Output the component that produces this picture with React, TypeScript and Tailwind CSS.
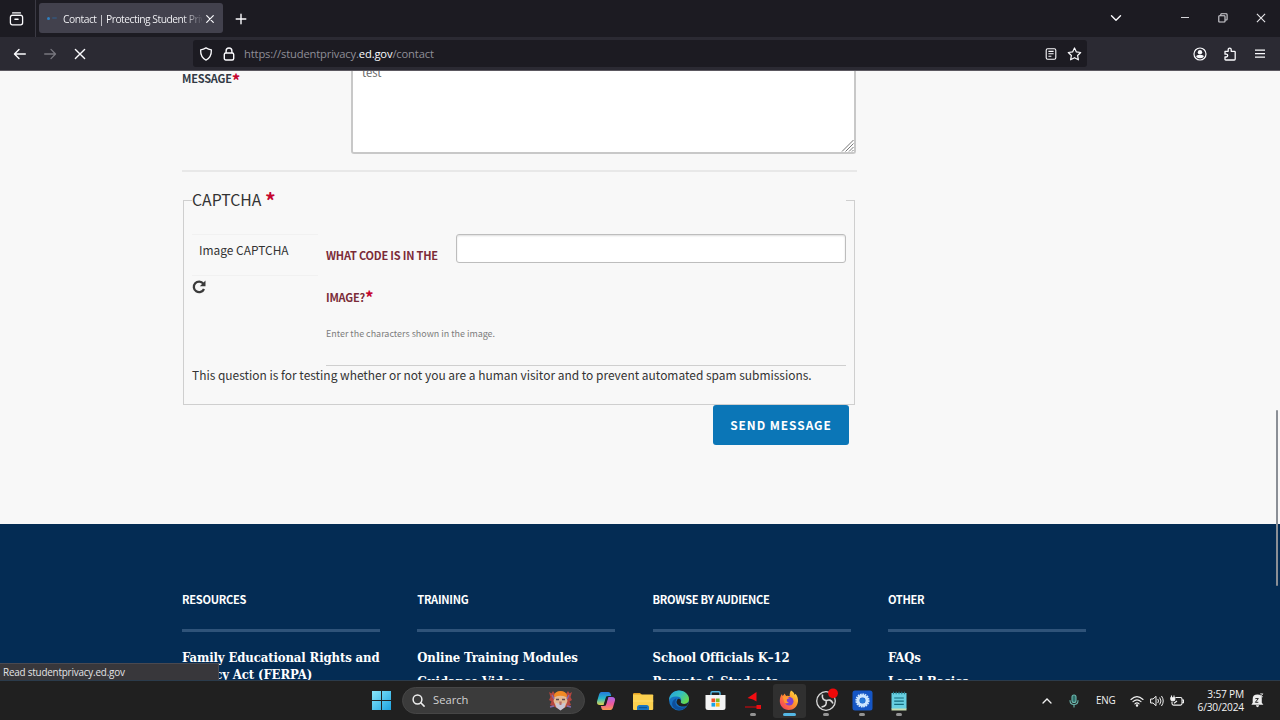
import React from "react";

const footerColumns = [
  {
    title: "Resources",
    links: ["Family Educational Rights and Privacy Act (FERPA)"],
  },
  {
    title: "Training",
    links: ["Online Training Modules", "Guidance Videos"],
  },
  {
    title: "Browse by Audience",
    links: ["School Officials K–12", "Parents & Students"],
  },
  {
    title: "Other",
    links: ["FAQs", "Legal Basics"],
  },
];

const TabStrip = () => {
  return (
    <div className="flex h-[37px] bg-[#1c1b22] text-[#fbfbfe]">
      <div className="flex w-9 items-center border-r border-[#3b3a44] pl-[9px]">
        <svg width="16" height="16" viewBox="0 0 16 16" fill="none" stroke="currentColor" strokeWidth="1.3" strokeLinecap="round">
          <path d="M3.6 1.9h7.8M2.4 4.4h10.2" />
          <rect x="1.4" y="4.4" width="12.2" height="9.4" rx="2" />
          <path d="M6 8.2h3" strokeWidth="1.6" />
        </svg>
      </div>
      <div className="mt-[3px] ml-[3px] flex h-[30px] w-[184px] items-center rounded-[3px] bg-[#42414d]">
        <span className="ml-2 h-[3px] w-[3px] rounded-full bg-[#2f7fc0]" />
        <span className="ml-[2px] h-[2px] w-[5px] rounded-full bg-[#38506f]" />
        <span className="mt-px ml-[6px] w-[139px] overflow-hidden bg-linear-to-r from-[#fbfbfe] from-[86%] to-[#55545f] bg-clip-text text-[10.3px] leading-[18px] tracking-[-0.5px] whitespace-nowrap text-transparent">
          Contact | Protecting Student Privacy
        </span>
        <svg className="mt-px ml-[3px]" width="10" height="10" viewBox="0 0 10 10" stroke="currentColor" strokeWidth="1.2" strokeLinecap="round">
          <path d="M1.7 1.7l6.6 6.6M8.3 1.7L1.7 8.3" />
        </svg>
      </div>
      <svg className="mt-[13px] ml-3" width="12" height="12" viewBox="0 0 12 12" stroke="currentColor" strokeWidth="1.4" strokeLinecap="round">
        <path d="M6 1.2v9.6M1.2 6h9.6" />
      </svg>
      <div className="ml-auto flex h-[36px] items-center">
        <svg width="12" height="12" viewBox="0 0 12 12" fill="none" stroke="currentColor" strokeWidth="1.4" strokeLinecap="round" strokeLinejoin="round">
          <path d="M1.5 3.8L6 8.2l4.5-4.4" />
        </svg>
        <svg className="ml-[58px]" width="10" height="10" viewBox="0 0 10 10" stroke="#d5d5da" strokeWidth="1">
          <path d="M1 4.5h8" />
        </svg>
        <svg className="ml-[28px]" width="10" height="10" viewBox="0 0 10 10" fill="none" stroke="#d5d5da" strokeWidth="1.1">
          <rect x="0.8" y="2.8" width="6.2" height="6.2" rx="0.6" />
          <path d="M2.8 2.6V1.6q0-.8.8-.8h4.6q.9 0 .9.9v4.5q0 .8-.8.8H7.2" />
        </svg>
        <svg className="mr-[14px] ml-[28px]" width="10" height="10" viewBox="0 0 10 10" stroke="#e8e8ec" strokeWidth="1.1">
          <path d="M.9.9l8.2 8.2M9.1.9L.9 9.1" />
        </svg>
      </div>
    </div>
  );
};

const Toolbar = () => {
  return (
    <div className="flex h-[34px] items-center border-b border-[#5b5860] bg-[#2b2a33] text-[#fbfbfe]">
      <svg className="ml-[13px]" width="14" height="12" viewBox="0 0 14 12" fill="none" stroke="currentColor" strokeWidth="1.4" strokeLinecap="round" strokeLinejoin="round">
        <path d="M12.3 6H1.7M6 1.4L1.5 6 6 10.6" />
      </svg>
      <svg className="ml-4" width="14" height="12" viewBox="0 0 14 12" fill="none" stroke="#78777f" strokeWidth="1.3" strokeLinecap="round" strokeLinejoin="round">
        <path d="M1.7 6h10.6M8 1.4L12.5 6 8 10.6" />
      </svg>
      <svg className="ml-[17px]" width="12" height="12" viewBox="0 0 12 12" stroke="currentColor" strokeWidth="1.4" strokeLinecap="round">
        <path d="M1.4 1.4l9.2 9.2M10.6 1.4l-9.2 9.2" />
      </svg>
      <div className="ml-[107px] flex h-[27px] w-[894px] items-center rounded-[3px] bg-[#1c1b22]">
        <svg className="ml-[6px]" width="14" height="14" viewBox="0 0 14 14" fill="none" stroke="currentColor" strokeWidth="1.3" strokeLinejoin="round">
          <path d="M7 .9c1.7 1.1 3.5 1.7 5.4 1.9C12.5 7.5 11.2 11.2 7 13.1 2.8 11.2 1.5 7.5 1.6 2.8 3.5 2.6 5.3 2 7 .9z" />
        </svg>
        <svg className="ml-[10px]" width="12" height="14" viewBox="0 0 12 14" fill="none" stroke="currentColor" strokeWidth="1.4">
          <rect x="1.3" y="6" width="9.4" height="7" rx="1.5" />
          <path d="M3.1 6V3.9a2.9 2.9 0 0 1 5.8 0V6" />
        </svg>
        <span className="mt-px ml-[9px] text-[11.2px] leading-[18px] tracking-[-0.15px] text-[#8f8e97]">
          https://studentprivacy.<span className="text-[#fbfbfe]">ed.gov</span>/contact
        </span>
        <svg className="ml-auto" width="12" height="12" viewBox="0 0 12 12" fill="none" stroke="currentColor" strokeWidth="1.1">
          <rect x="1.2" y=".8" width="9.6" height="10.4" rx="1.5" />
          <path d="M3.4 3.4h5.2M3.4 5.8h5.2M3.4 8.2h3" />
        </svg>
        <svg className="mr-[5px] ml-[10px]" width="15" height="14" viewBox="0 0 15 14" fill="none" stroke="currentColor" strokeWidth="1.2" strokeLinejoin="round">
          <path d="M7.5 1l1.9 3.9 4.3.6-3.1 3 .8 4.3-3.9-2.1-3.9 2.1.8-4.3-3.1-3 4.3-.6z" />
        </svg>
      </div>
      <div className="mr-[14px] ml-auto flex items-center">
        <svg width="14" height="14" viewBox="0 0 14 14">
          <circle cx="7" cy="7" r="6" fill="none" stroke="currentColor" strokeWidth="1.2" />
          <circle cx="7" cy="5.3" r="2.2" fill="currentColor" />
          <path d="M3.2 9.8q0-1.9 1.9-1.9h3.8q1.9 0 1.9 1.9Q9.3 11.3 7 11.3T3.2 9.8z" fill="currentColor" />
        </svg>
        <svg className="ml-[16px]" width="14" height="14" viewBox="0 0 14 14" fill="none" stroke="currentColor" strokeWidth="1.3" strokeLinejoin="round">
          <path d="M2 4.3h3.2V2.6a1.5 1.5 0 0 1 3 0v1.7h3.2q.8 0 .8.8v7q0 .9-.9.9H2.800q-.8 0-.8-.8V10h1.300a1.400 1.400 0 0 0 0-2.800H2z" />
        </svg>
        <svg className="ml-[17px]" width="12" height="12" viewBox="0 0 12 12" stroke="currentColor" strokeWidth="1.2">
          <path d="M1 2.2h10M1 5.7h10M1 9.2h10" />
        </svg>
      </div>
    </div>
  );
};

const ContactForm = () => {
  return (
    <div className="h-[453px] bg-[#f8f8f8] pl-[182px] text-[#333]">
      <div className="w-[675px]">
        <div className="flex h-[83px]">
          <div className="-mt-px flex w-[169px] text-[11px] leading-4 font-bold tracking-[-0.2px] text-[#323a45]">
            MESSAGE<span className="text-[17px] leading-[20px] text-[#c5052f]">*</span>
          </div>
          <div className="relative h-[83px] w-[505px] overflow-hidden rounded-b-[3px] border-2 border-t-0 border-[#c8c8c8] bg-white pl-[9px]">
            <div className="-mt-[7px] text-[11.2px] leading-4 text-[#666]">test</div>
            <svg className="absolute right-0 bottom-0" width="13" height="13" viewBox="0 0 13 13" stroke="#777" strokeWidth="1">
              <path d="M1 12.5L12.5 1M4.5 12.5l8-8M8 12.5L12.5 8M11 12.5l1.5-1.5" />
            </svg>
          </div>
        </div>
        <div className="mt-4 h-[2px] bg-[#e8e8e8]" />
        <fieldset className="mt-[14px] ml-px h-[219px] w-[672px] border border-[#cfcfcf] px-2">
          <legend className="h-[28px] w-full text-[15.8px] leading-[28px]">
            CAPTCHA <span className="relative top-[3px] text-[21px] leading-none font-bold text-[#c5052f]">*</span>
          </legend>
          <div className="mt-[20px] flex h-[132px]">
            <div className="w-[134px]">
              <div className="h-[42px] w-[126px] border-y border-[#f1f1f1] pl-[7px] text-[11.95px] leading-[30px]">
                Image CAPTCHA
              </div>
              <svg className="mt-[4px]" width="14" height="14" viewBox="0 0 14 14">
                <path d="M11.3 3.6A5.3 5.3 0 1 0 12 9" fill="none" stroke="#3b3b3b" strokeWidth="2.3" />
                <path d="M13.5.5v5.700H7.800z" fill="#3b3b3b" />
              </svg>
            </div>
            <div className="w-[520px] border-b border-[#cfcfcf]">
              <div className="flex h-[84px]">
                <div className="w-[130px] text-[11px] leading-[42px] font-bold tracking-[-0.2px] text-[#7b2c38]">
                  WHAT CODE IS IN THE IMAGE?
                  <span className="relative top-[2px] text-[17px] leading-none text-[#c5052f]">*</span>
                </div>
                <div className="h-[29px] w-[390px] rounded-[3px] border border-[#bdbdbd] bg-white shadow-[inset_0_1px_2px_#ddd]" />
              </div>
              <div className="mt-[7px] text-[8.95px] leading-[18px] text-[#7d7d7d]">
                Enter the characters shown in the image.
              </div>
            </div>
          </div>
          <div className="-mt-px text-[11.95px] leading-5">
            This question is for testing whether or not you are a human visitor and to prevent automated spam submissions.
          </div>
        </fieldset>
        <div className="ml-[531px] flex h-10 w-[136px] items-center justify-center rounded-[3px] bg-[#0b76b7] text-[11.9px] font-bold tracking-[0.95px] text-white">
          SEND MESSAGE
        </div>
      </div>
    </div>
  );
};

const Footer = () => {
  return (
    <div className="flex h-[156px] overflow-hidden bg-[#042c54] pt-[66px] pl-[182px] text-white">
      {footerColumns.map((column, index) => (
        <div key={index} className="w-[235.3px] shrink-0">
          <h3 className="text-[11.1px] leading-[18px] font-bold tracking-[-0.3px] uppercase">{column.title}</h3>
          <div className="mt-[21px] h-[3px] w-[198px] bg-[#2f5379]" />
          {column.links.map((link) => (
            <p
              key={link}
              className="mt-[16.5px] w-[205px] font-['DejaVu_Serif_Condensed','DejaVu_Serif',serif] text-[13px] leading-[17.5px] font-bold tracking-[-0.12px] [&+p]:mt-[6.5px]"
            >
              {link}
            </p>
          ))}
        </div>
      ))}
    </div>
  );
};

const TaskIcon = ({ children, running, active }: { children: React.ReactNode; running?: boolean; active?: boolean }) => {
  return (
    <div className={`relative flex h-[34px] w-[33px] items-center justify-center rounded-[3px] ${active ? "bg-[#303030]" : ""}`}>
      {children}
      {running && (
        <span className={`absolute bottom-[2px] h-[3px] rounded-full ${active ? "w-[13px] bg-[#55b7e4]" : "w-[6px] bg-[#939393]"}`} />
      )}
    </div>
  );
};

const Taskbar = () => {
  return (
    <div className="flex h-10 items-center border-t border-[#2b3b4b] bg-[#202020] font-['Open_Sans',sans-serif] text-[#f2f2f2]">
      <svg className="ml-[371px]" width="21" height="21" viewBox="0 0 21 21">
        <defs>
          <linearGradient id="win" x1="0" y1="0" x2="1" y2="1">
            <stop offset="0" stopColor="#8ae8fb" />
            <stop offset="1" stopColor="#1ca2e0" />
          </linearGradient>
        </defs>
        <path d="M1 1h9v9H1zM11 1h9v9h-9zM1 11h9v9H1zM11 11h9v9h-9z" fill="url(#win)" />
      </svg>
      <div className="ml-[10px] flex h-[27px] w-[183px] items-center rounded-full border border-[#464646] bg-[#3b3b3b]">
        <svg className="ml-[9px]" width="13" height="13" viewBox="0 0 13 13" fill="none" stroke="#eee" strokeWidth="1.5" strokeLinecap="round">
          <circle cx="5.5" cy="5.5" r="4.4" />
          <path d="M8.8 8.8l3.3 3.3" />
        </svg>
        <span className="ml-[8px] text-[11.2px] text-[#d2d2d2]">Search</span>
        <svg className="mr-[11px] ml-auto" width="25" height="21" viewBox="0 0 25 21">
          <path d="M1 2l2.5 1.5L5 1l2 3 5.5-3L18 4l2-3 1.5 2.5L24 2l-1.5 5L24 10l-2.5 1.5L23 15l-4 1.5L12.5 20 6 16.5 2 15l1.500-3.500L1 10l1.500-3z" fill="#b5463f" />
          <path d="M7 5q5.500-3 11 0l1.500 6-2.500 6q-4.500 3-9 0l-2.500-6z" fill="#e3b994" />
          <path d="M6 5.500q1-4.500 6.500-4.500T19 5.500l-1 1.500q-5.500-2.500-11 0z" fill="#f08a24" />
          <path d="M7.500 12.500q5 2.500 10 0l-1 5-4 3-4-3z" fill="#c9c5d4" />
          <path d="M8 9.500h3M14 9.500h3" stroke="#5d4a52" strokeWidth="1.5" />
          <path d="M11.200 11.500h2.600l-.4 3.500h-1.800z" fill="#bb6c68" />
          <path d="M2 17l4-1M23 17l-4-1M4 5l2 4M21 5l-2 4" stroke="#806caf" strokeWidth="1.3" />
        </svg>
      </div>
      <div className="ml-[4.5px] flex gap-[3.65px]">
        <TaskIcon>
          <svg width="20" height="20" viewBox="0 0 20 20">
            <defs>
              <linearGradient id="copA" x1="0" y1="0" x2="0" y2="1">
                <stop offset="0" stopColor="#2479dc" />
                <stop offset=".5" stopColor="#27b7c9" />
                <stop offset="1" stopColor="#e3d54b" />
              </linearGradient>
              <linearGradient id="copB" x1="0" y1="0" x2="0" y2="1">
                <stop offset="0" stopColor="#a865e9" />
                <stop offset=".55" stopColor="#ef5a9a" />
                <stop offset="1" stopColor="#f79a50" />
              </linearGradient>
            </defs>
            <path d="M5.500 1h7q1.500 0 2 1.500l.7 2.500h-2.700q-2 0-2.500 2L8 14H4Q.5 14 1 10.500L3.200 3Q4 1 5.500 1z" fill="url(#copA)" />
            <path d="M14.500 19h-7q-1.500 0-2-1.500L4.800 15h2.700q2 0 2.500-2l2-7h4q3.500 0 3 3.500L16.800 17q-.8 2-2.300 2z" fill="url(#copB)" />
            <path d="M10.200 5.500h2.400l-2.800 9H7.400z" fill="#202020" />
          </svg>
        </TaskIcon>
        <TaskIcon>
          <svg width="22" height="20" viewBox="0 0 22 20">
            <path d="M1 3.200Q1 2 2.200 2H8l2 2H1z" fill="#e3a021" />
            <path d="M1 3.500h19.500q.7 0 .7.800V18q0 1-1 1H2q-1 0-1-1z" fill="#fbd04f" />
            <path d="M1 9h20.200v2H1z" fill="#ffdc69" opacity=".6" />
            <path d="M5 19v-2.500q0-2.500 2.500-2.500h7q2.500 0 2.500 2.500V19z" fill="#1976c4" />
            <path d="M7 16h8v1.200H7z" fill="#0d5596" />
          </svg>
        </TaskIcon>
        <TaskIcon>
          <svg width="22" height="21" viewBox="0 0 22 21">
            <defs>
              <linearGradient id="edgeA" x1="0" y1="0" x2="1" y2=".6">
                <stop offset="0" stopColor="#249de0" />
                <stop offset=".55" stopColor="#35c1bd" />
                <stop offset="1" stopColor="#66d94e" />
              </linearGradient>
            </defs>
            <circle cx="11" cy="10.5" r="9.9" fill="#1572c4" />
            <path d="M1.100 10.500C1.100 4.500 5.600.6 11 .6c6 0 10 4.200 10 8.400 0 3.600-2.600 5-5 5-2.300 0-3.500-.9-3.200-1.900.9-1.800.6-4.600-2.300-5.300C6 5.600 2.400 7 1.100 10.500z" fill="url(#edgeA)" />
            <path d="M7.500 11.500c-.7 4.500 4 7.500 11.500 5.100-4.600 5.200-12.700 4.400-14.600-.8-1-3.400.7-6.400 4.100-7.600z" fill="#0e4f9c" />
            <path d="M9.500 9.200c2-1 4 .4 3.300 2.900-.3 1 .9 1.900 3.200 1.900 2 0 3.600-.7 4.500-2.200-.5 2.500-1.300 4-2.700 4.400-4.500 1.300-9.300-.7-9.300-4.500z" fill="#202020" />
          </svg>
        </TaskIcon>
        <TaskIcon>
          <svg width="21" height="21" viewBox="0 0 21 21">
            <path d="M6 6V3q0-1.300 1.300-1.300h6.400Q15 1.700 15 3v3" fill="none" stroke="#4fb5e2" strokeWidth="1.4" />
            <path d="M.5 5h20v12.500q0 2.500-2.500 2.500H3q-2.500 0-2.500-2.500z" fill="#f4f4f4" />
            <path d="M6.500 8.500h3.700v3.700H6.500z" fill="#ef5023" />
            <path d="M10.900 8.500h3.700v3.700h-3.700z" fill="#7fba28" />
            <path d="M6.500 12.900h3.700v3.700H6.500z" fill="#18a3e8" />
            <path d="M10.900 12.900h3.700v3.700h-3.700z" fill="#fcb813" />
          </svg>
        </TaskIcon>
        <TaskIcon running>
          <svg width="18" height="20" viewBox="0 0 18 20">
            <path d="M12.500 1v9.500L9 8.500 3.500 7z" fill="#f20d12" />
            <path d="M1 16h12" stroke="#b60c10" strokeWidth="1.3" />
            <path d="M12.500 14h4.500v4h-4.500z" fill="#ee0d12" />
          </svg>
        </TaskIcon>
        <TaskIcon running active>
          <svg width="20" height="21" viewBox="0 0 20 21">
            <defs>
              <linearGradient id="fox" x1="1" y1="0" x2="0" y2="1">
                <stop offset="0" stopColor="#fff04c" />
                <stop offset=".4" stopColor="#ff9a2b" />
                <stop offset="1" stopColor="#f22e63" />
              </linearGradient>
            </defs>
            <path d="M12 .5c3 1.800 3.500 3.500 3.700 4.600l.8-1.400C18.500 6 19.300 8.500 19 11.500c-.5 5-4.500 8.500-9.200 8.500C4.500 20 .8 15.800.8 11c0-3 .9-5.300 2.200-6.900l.5 2C4.300 5.200 5 4.700 5.500 3.500l1.700 2.400c1.500-.5 2.800-.2 3.500.3C10.500 4 11 2 12 .5z" fill="url(#fox)" />
            <circle cx="10.200" cy="11.300" r="4.300" fill="#7d3fd1" />
            <path d="M3.500 6.300C6 6 9 6.500 10.700 8.500c-1.500-.2-2.400.2-2.900 1.200-.3 1.200.6 2.300 2.100 2.500-1.500 1.800-4 1.200-4.700-.5z" fill="#ff9830" />
          </svg>
        </TaskIcon>
        <TaskIcon running>
          <svg width="24" height="24" viewBox="0 0 24 24" className="-mt-1">
            <circle cx="12" cy="14" r="9.300" fill="#252525" stroke="#d9d9d9" strokeWidth="1.300" />
            <path d="M12.500 13.500Q7.500 13 8.500 7.500M12 14q4.500-3 7 2.500M12 14q1.500 5-4.500 6" fill="none" stroke="#d9d9d9" strokeWidth="1.600" />
            <circle cx="19" cy="6.300" r="4.900" fill="#f00808" />
          </svg>
        </TaskIcon>
        <TaskIcon running>
          <svg width="21" height="21" viewBox="0 0 21 21">
            <rect x=".5" y=".5" width="20" height="20" rx="2.500" fill="#1556c5" />
            <circle cx="10.500" cy="10.500" r="6.300" fill="none" stroke="#d5ebff" strokeWidth="1.600" strokeDasharray="1.700 .7" />
            <circle cx="10.500" cy="10.500" r="4.500" fill="none" stroke="#cce6ff" strokeWidth="3" />
            <circle cx="10.500" cy="10.500" r="2.600" fill="#287bd9" />
          </svg>
        </TaskIcon>
        <TaskIcon running>
          <svg width="16" height="20" viewBox="0 0 16 20">
            <path d="M.5 2h15v16H.5z" fill="#67cfe1" />
            <path d="M.5 17.500h15v2H.5z" fill="#c8ddb0" />
            <path d="M3.200 7h9.600M3.200 10.200h9.600M3.200 13.400h9.600" stroke="#146b7c" strokeWidth="1.200" />
            <path d="M2.500.7v2.500M5.200.7v2.500M8 .7v2.500M10.800.7v2.500M13.500.7v2.500" stroke="#277e8d" strokeWidth="1.100" />
          </svg>
        </TaskIcon>
      </div>
      <div className="mr-[16px] ml-auto flex items-center">
        <svg width="10" height="8" viewBox="0 0 10 8" fill="none" stroke="currentColor" strokeWidth="1.300" strokeLinecap="round">
          <path d="M1 6l4-4 4 4" />
        </svg>
        <svg className="ml-[17px]" width="10" height="14" viewBox="0 0 10 14" fill="none" stroke="#6cb7ae" strokeWidth="1.100" strokeLinecap="round">
          <rect x="3" y="1" width="4" height="7.500" rx="2" fill="#2f6f69" />
          <path d="M1 6.500q0 4 4 4t4-4M5 10.500V13" />
        </svg>
        <span className="ml-[17px] w-5 text-[9.9px] tracking-[-0.2px]">ENG</span>
        <svg className="ml-[14px]" width="14" height="12" viewBox="0 0 14 12" fill="none" stroke="currentColor" strokeWidth="1.100" strokeLinecap="round">
          <path d="M1 4.500q6-5.600 12 0M3 6.700q4-3.700 8 0M4.900 8.800q2.100-1.900 4.200 0" />
          <circle cx="7" cy="10.400" r=".7" fill="currentColor" />
        </svg>
        <svg className="ml-[6px]" width="14" height="12" viewBox="0 0 14 12" fill="none" stroke="currentColor" strokeWidth="1" strokeLinecap="round" strokeLinejoin="round">
          <path d="M1 4h2l3-2.700v9.400L3 8H1zM8 4.300q1.300 1.700 0 3.400M9.900 2.800q2.400 3.200 0 6.400M11.700 1.300q3.300 4.700 0 9.400" />
        </svg>
        <svg className="ml-[6px]" width="14" height="12" viewBox="0 0 14 12" fill="none" stroke="currentColor" strokeWidth="1.100">
          <path d="M5.500 2.500h5q1.500 0 1.500 1.500v4.600q0 1.500-1.500 1.500H3.500Q2 10.100 2 8.600V6.500M12.200 5h1.300v2.800h-1.300" />
          <path d="M1.500 .5v2M4 .5v2M.8 2.800h4v1.400q0 1.600-2 1.600t-2-1.600z" fill="currentColor" />
          <path d="M4 8.300l3-2.300" />
        </svg>
        <div className="ml-[9px] w-[51px] text-right text-[10.2px] leading-[13px] tracking-[-0.2px] whitespace-nowrap">
          <div>3:57 PM</div>
          <div>6/30/2024</div>
        </div>
        <svg className="ml-[7px]" width="13" height="15" viewBox="0 0 12 14">
          <path d="M1.500 5.500Q1.500 1.500 6 1.500t4 4V9l1.500 2H.3L1.500 9z" fill="#eee" />
          <path d="M4.500 11.500h3q-.2 1.700-1.500 1.700t-1.500-1.700z" fill="#eee" />
          <path d="M4 5.200h2.800L4 8.700h2.800" fill="none" stroke="#222" strokeWidth=".9" />
          <path d="M8.500.8h2.500L8.500 3.500H11" fill="none" stroke="#eee" strokeWidth=".8" />
        </svg>
      </div>
    </div>
  );
};

const App = () => {
  return (
    <div className="relative flex h-[720px] w-[1280px] flex-col overflow-hidden font-['Open_Sans',sans-serif]">
      <TabStrip />
      <Toolbar />
      <div className="relative h-[609px] overflow-hidden font-['Noto_Sans_CJK_SC',sans-serif]">
        <ContactForm />
        <Footer />
        <div className="absolute top-[339px] right-[2px] h-[176px] w-[2px] rounded-full bg-[#8b8f96]" />
        <div className="absolute bottom-0 left-0 h-[17px] w-[219px] rounded-tr-[2px] border-t border-r border-[#4a4950] bg-[#38373b] pl-[3px] font-['Open_Sans',sans-serif] text-[9.9px] leading-[17px] tracking-[-0.2px] text-[#e3e3e6]">
          Read studentprivacy.ed.gov
        </div>
      </div>
      <Taskbar />
    </div>
  );
};

export default App;
